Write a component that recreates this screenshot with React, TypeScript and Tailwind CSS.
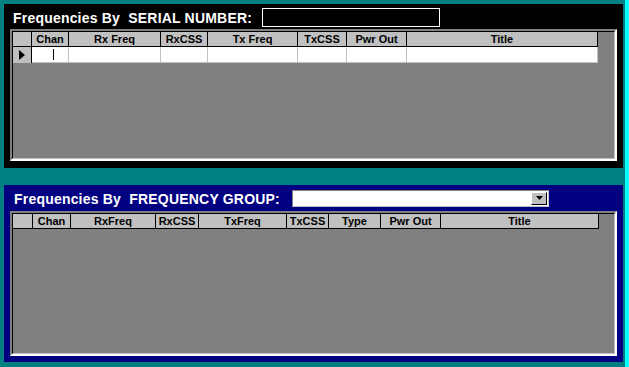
const topCols = [
  { label: "Chan", w: 37 },
  { label: "Rx Freq", w: 92 },
  { label: "RxCSS", w: 47 },
  { label: "Tx Freq", w: 90 },
  { label: "TxCSS", w: 49 },
  { label: "Pwr Out", w: 60 },
  { label: "Title", w: 191 },
];

const bottomCols = [
  { label: "Chan", w: 38 },
  { label: "RxFreq", w: 85 },
  { label: "RxCSS", w: 43 },
  { label: "TxFreq", w: 88 },
  { label: "TxCSS", w: 42 },
  { label: "Type", w: 52 },
  { label: "Pwr Out", w: 60 },
  { label: "Title", w: 158 },
];

type Col = { label: string; w: number };

function Grid({ cols, indicatorW, withRow }: { cols: Col[]; indicatorW: number; withRow?: boolean }) {
  return (
    <div className="flex-1 border-2 border-t-[#808080] border-l-[#808080] border-r-white border-b-white bg-[#808080]">
      <div className="h-full border border-black border-r-[#c0c0c0] border-b-[#c0c0c0] flex flex-col">
        {/* header */}
        <div className="flex h-[15px]">
          <div
            className="bg-[#c0c0c0] border-r border-b border-black"
            style={{ width: indicatorW }}
          />
          {cols.map((c) => (
            <div
              key={c.label}
              className="bg-[#c0c0c0] border-r border-b border-black text-black text-[11px] font-bold leading-[14px] text-center overflow-hidden whitespace-nowrap"
              style={{ width: c.w }}
            >
              {c.label}
            </div>
          ))}
        </div>
        {withRow && (
          <div className="flex h-[16px]">
            <div
              className="bg-[#c0c0c0] border-r border-black flex items-center justify-center"
              style={{ width: indicatorW }}
            >
              <svg width="6" height="10" viewBox="0 0 6 10">
                <path d="M0 0 L6 5 L0 10 Z" fill="#000" />
              </svg>
            </div>
            {cols.map((c, i) => (
              <div
                key={c.label}
                className="bg-white border-r border-b border-[#c0c0c0] relative"
                style={{ width: c.w }}
              >
                {i === 0 && <div className="absolute left-[21px] top-[2px] w-px h-[11px] bg-black" />}
              </div>
            ))}
          </div>
        )}
      </div>
    </div>
  );
}

export default function App() {
  return (
    <div
      className="w-[629px] h-[367px] bg-[#008080] flex overflow-hidden"
      style={{ fontFamily: '"Liberation Sans", Arial, sans-serif' }}
    >
      <div className="flex-1 flex flex-col pt-[4px] pl-[4px] pr-[2px]">
        {/* Serial number panel */}
        <div className="h-[164px] bg-black flex flex-col px-[6px] pb-[7px]">
          <div className="h-[25px] flex items-center pl-[3px]">
            <span className="w-[249px] text-white text-[14px] font-bold whitespace-pre leading-none mt-[2px] tracking-[0.2px]">
              Frequencies By  SERIAL NUMBER:
            </span>
            <div className="w-[178px] h-[19px] border border-white bg-black mt-[1px]" />
          </div>
          <Grid cols={topCols} indicatorW={19} withRow />
        </div>

        <div className="h-[17px]" />

        {/* Frequency group panel */}
        <div className="h-[177px] bg-[#000080] flex flex-col pl-[6px] pr-[6px] pb-[6px]">
          <div className="h-[26px] flex items-center pl-[4px]">
            <span className="w-[278px] text-white text-[14px] font-bold whitespace-pre leading-none mt-[2px] tracking-[0.2px]">
              Frequencies By  FREQUENCY GROUP:
            </span>
            <div className="w-[257px] h-[17px] bg-white border border-[#808080] border-r-[#c0c0c0] border-b-[#c0c0c0] flex justify-end items-center pr-[1px]">
              <div className="w-[16px] h-[13px] bg-[#c0c0c0] border border-t-white border-l-white border-r-black border-b-black flex items-center justify-center">
                <svg width="7" height="4" viewBox="0 0 7 4">
                  <path d="M0 0 L7 0 L3.5 4 Z" fill="#000" />
                </svg>
              </div>
            </div>
          </div>
          <Grid cols={bottomCols} indicatorW={20} />
        </div>
      </div>
      <div className="w-[4px] h-full bg-[#00ffff]" />
    </div>
  );
}
